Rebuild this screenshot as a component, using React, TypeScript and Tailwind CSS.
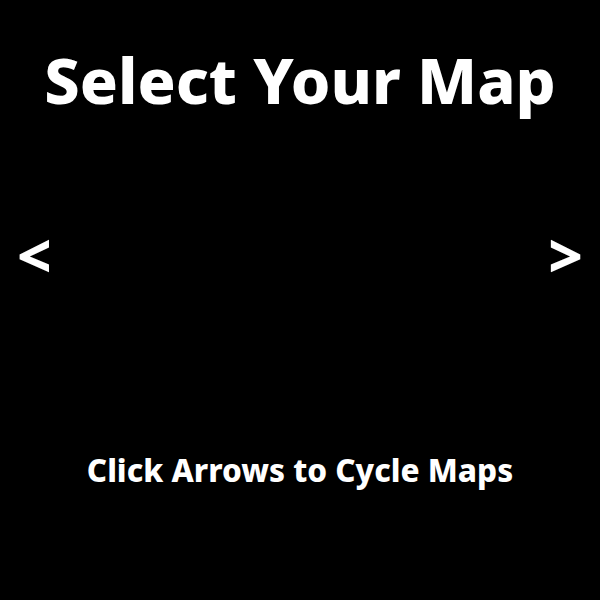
import React from "react";

export default function App() {
  return (
    <div className="w-[600px] h-[600px] bg-black text-white flex flex-col font-['Noto_Sans',sans-serif]">
      <h1 className="text-[63px] font-extrabold text-center leading-none mt-[48px]">Select Your Map</h1>
      <div className="flex justify-between items-center px-[17px] mt-[114px]">
        <button className="text-[60px] font-extrabold leading-none">&lt;</button>
        <button className="text-[60px] font-extrabold leading-none">&gt;</button>
      </div>
      <p className="text-[31.5px] font-extrabold text-center leading-none mt-[169px]">Click Arrows to Cycle Maps</p>
    </div>
  );
}
